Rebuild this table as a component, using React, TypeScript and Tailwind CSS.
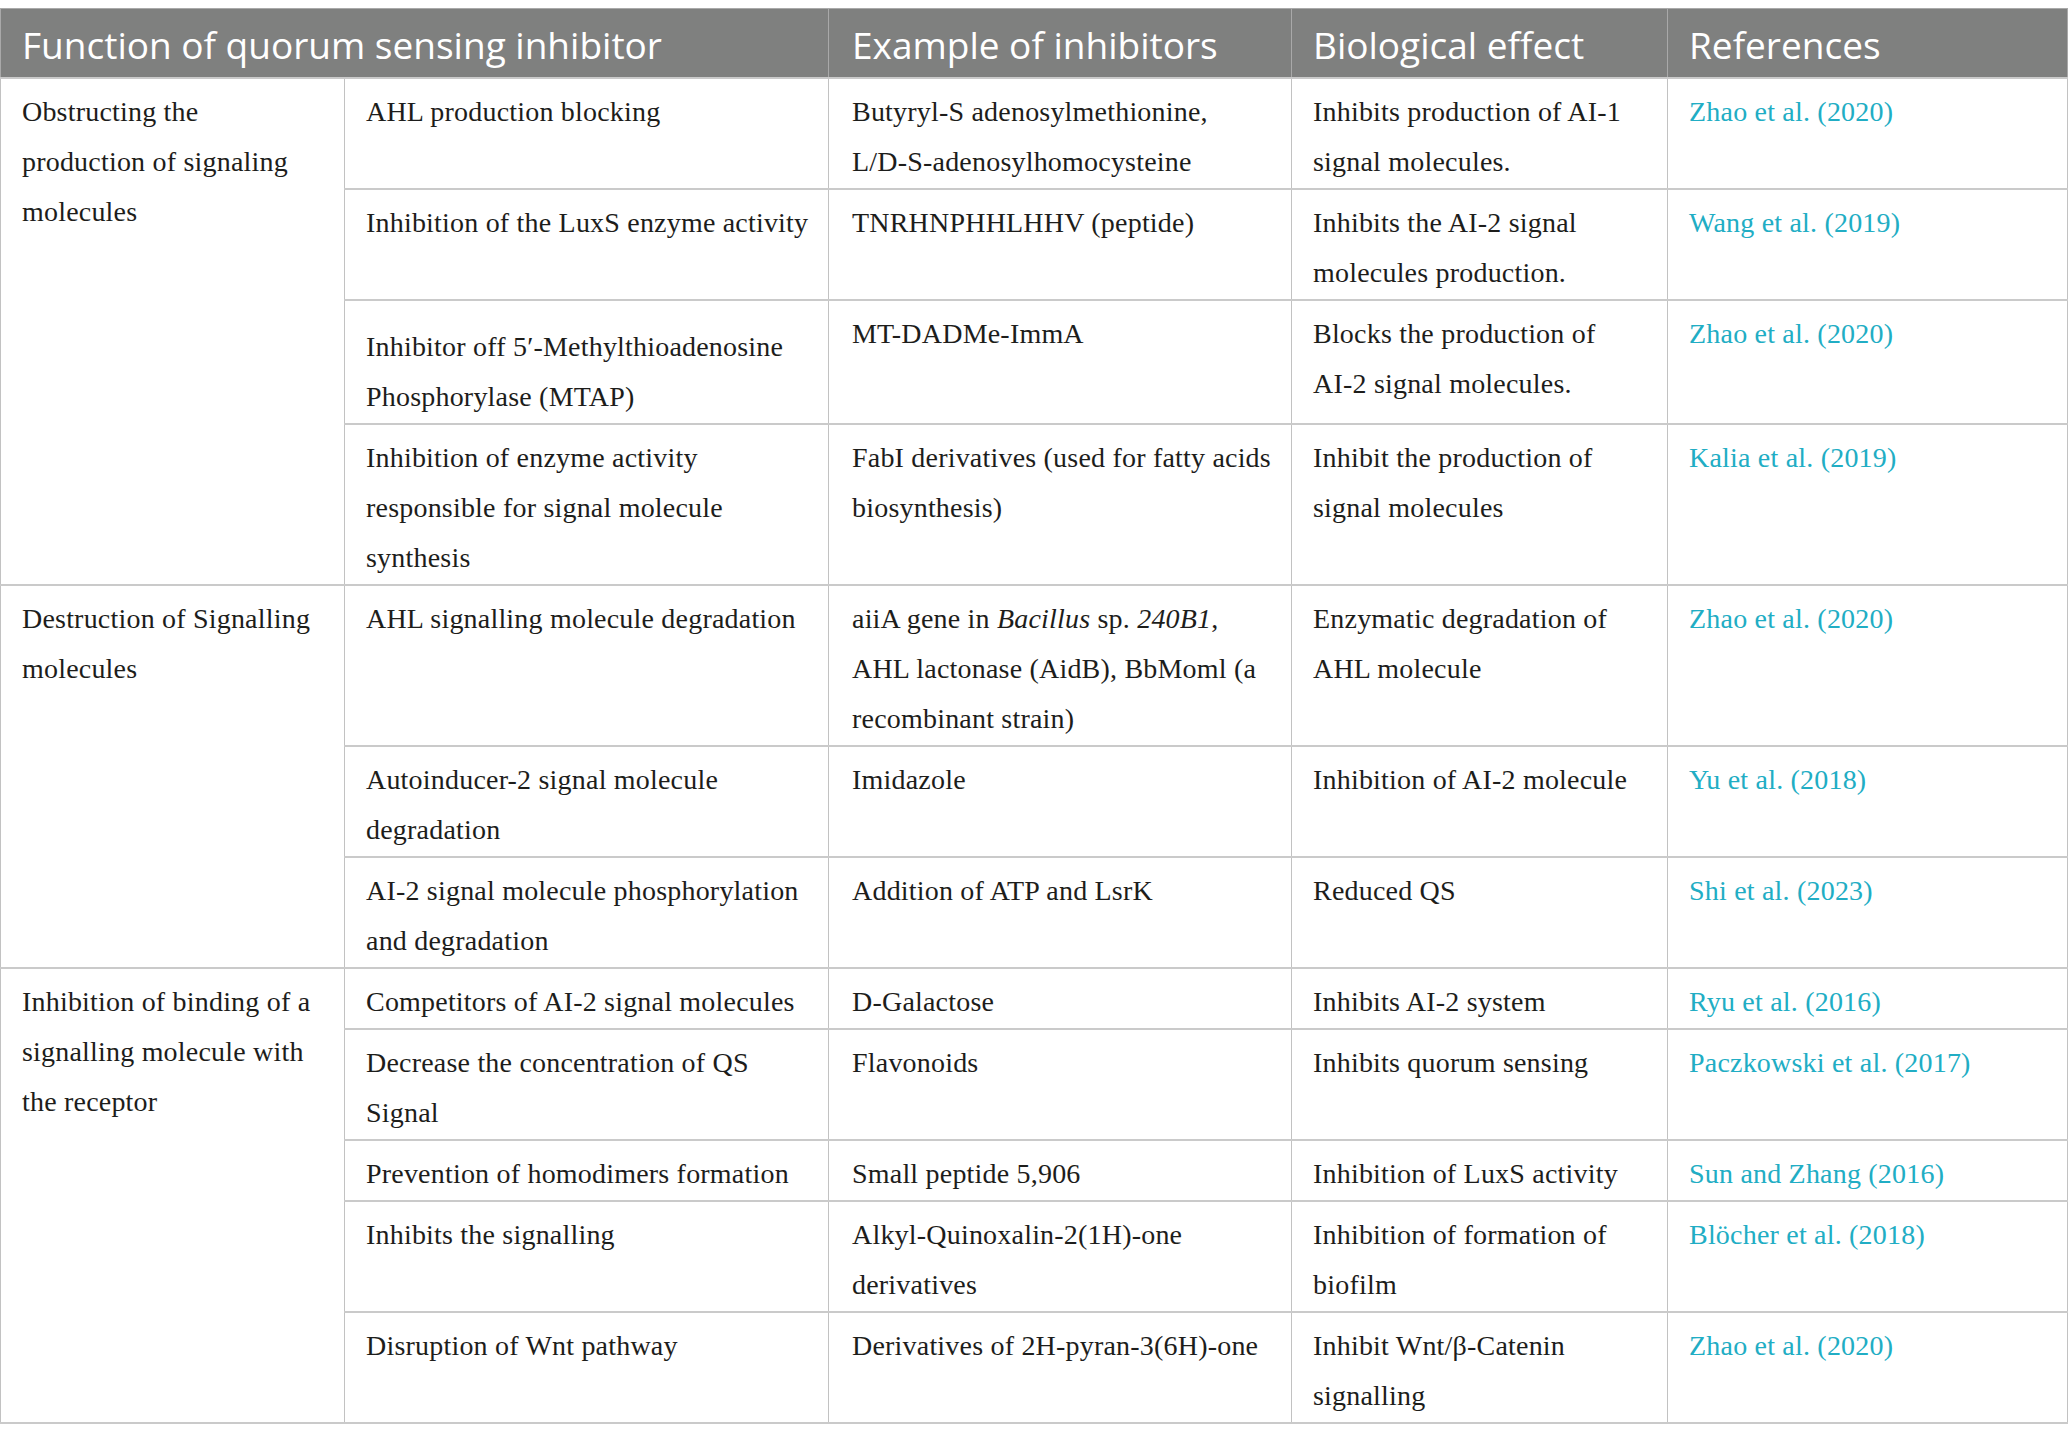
import React from 'react'

type Row = {
  fn: React.ReactNode[]
  example: React.ReactNode[]
  effect: React.ReactNode[]
  reference: string
  tall?: boolean
}

type Group = {
  title: string[]
  rows: Row[]
}

const groups: Group[] = [
  {
    title: ['Obstructing the', 'production of signaling', 'molecules'],
    rows: [
      {
        fn: ['AHL production blocking'],
        example: ['Butyryl-S adenosylmethionine,', 'L/D-S-adenosylhomocysteine'],
        effect: ['Inhibits production of AI-1', 'signal molecules.'],
        reference: 'Zhao et al. (2020)',
      },
      {
        fn: ['Inhibition of the LuxS enzyme activity'],
        example: ['TNRHNPHHLHHV (peptide)'],
        effect: ['Inhibits the AI-2 signal', 'molecules production.'],
        reference: 'Wang et al. (2019)',
      },
      {
        fn: ['Inhibitor off 5′-Methylthioadenosine', 'Phosphorylase (MTAP)'],
        example: ['MT-DADMe-ImmA'],
        effect: ['Blocks the production of', 'AI-2 signal molecules.'],
        reference: 'Zhao et al. (2020)',
        tall: true,
      },
      {
        fn: ['Inhibition of enzyme activity', 'responsible for signal molecule', 'synthesis'],
        example: ['FabI derivatives (used for fatty acids', 'biosynthesis)'],
        effect: ['Inhibit the production of', 'signal molecules'],
        reference: 'Kalia et al. (2019)',
      },
    ],
  },
  {
    title: ['Destruction of Signalling', 'molecules'],
    rows: [
      {
        fn: ['AHL signalling molecule degradation'],
        example: [
          <>
            aiiA gene in <i>Bacillus</i> sp. <i>240B1</i>,
          </>,
          'AHL lactonase (AidB), BbMoml (a',
          'recombinant strain)',
        ],
        effect: ['Enzymatic degradation of', 'AHL molecule'],
        reference: 'Zhao et al. (2020)',
      },
      {
        fn: ['Autoinducer-2 signal molecule', 'degradation'],
        example: ['Imidazole'],
        effect: ['Inhibition of AI-2 molecule'],
        reference: 'Yu et al. (2018)',
      },
      {
        fn: ['AI-2 signal molecule phosphorylation', 'and degradation'],
        example: ['Addition of ATP and LsrK'],
        effect: ['Reduced QS'],
        reference: 'Shi et al. (2023)',
      },
    ],
  },
  {
    title: ['Inhibition of binding of a', 'signalling molecule with', 'the receptor'],
    rows: [
      {
        fn: ['Competitors of AI-2 signal molecules'],
        example: ['D-Galactose'],
        effect: ['Inhibits AI-2 system'],
        reference: 'Ryu et al. (2016)',
      },
      {
        fn: ['Decrease the concentration of QS', 'Signal'],
        example: ['Flavonoids'],
        effect: ['Inhibits quorum sensing'],
        reference: 'Paczkowski et al. (2017)',
      },
      {
        fn: ['Prevention of homodimers formation'],
        example: ['Small peptide 5,906'],
        effect: ['Inhibition of LuxS activity'],
        reference: 'Sun and Zhang (2016)',
      },
      {
        fn: ['Inhibits the signalling'],
        example: ['Alkyl-Quinoxalin-2(1H)-one', 'derivatives'],
        effect: ['Inhibition of formation of', 'biofilm'],
        reference: 'Blöcher et al. (2018)',
      },
      {
        fn: ['Disruption of Wnt pathway'],
        example: ['Derivatives of 2H-pyran-3(6H)-one'],
        effect: ['Inhibit Wnt/β-Catenin', 'signalling'],
        reference: 'Zhao et al. (2020)',
      },
    ],
  },
]

function Lines({ lines }: { lines: React.ReactNode[] }) {
  return (
    <>
      {lines.map((l, i) => (
        <div key={i} className="whitespace-nowrap">
          {l}
        </div>
      ))}
    </>
  )
}

const cell = 'border-x border-x-[#c2c2c2] border-y-2 border-y-[#cacaca] pl-[21px] pr-[8px] pb-[1px] align-top'

export default function App() {
  return (
    <div className="w-[2068px] min-h-[1443px] bg-white pt-[8px]">
      <table
        className="table-fixed border-collapse w-[2067px] text-[28px] leading-[50px] tracking-[0.2px] text-[#1d1d1b]"
        style={{ fontFamily: '"Liberation Serif", "Times New Roman", serif' }}
      >
        <colgroup>
          <col className="w-[344px]" />
          <col className="w-[484px]" />
          <col className="w-[463px]" />
          <col className="w-[376px]" />
          <col className="w-[400px]" />
        </colgroup>
        <thead>
          <tr className="bg-[#7f807f] text-white text-left font-['Open_Sans',sans-serif] text-[37px] leading-[42px] tracking-normal">
            <th colSpan={2} className="font-normal border border-[#a9a9a9] pl-[21px] pt-[15px] pb-[11px]">
              Function of quorum sensing inhibitor
            </th>
            <th className="font-normal border border-[#a9a9a9] pl-[23px] pt-[15px] pb-[11px]">Example of inhibitors</th>
            <th className="font-normal border border-[#a9a9a9] pl-[21px] pt-[15px] pb-[11px]">Biological effect</th>
            <th className="font-normal border border-[#a9a9a9] pl-[21px] pt-[15px] pb-[11px]">References</th>
          </tr>
        </thead>
        <tbody>
          {groups.map((g, gi) =>
            g.rows.map((r, ri) => (
              <tr key={`${gi}-${ri}`}>
                {ri === 0 && (
                  <td rowSpan={g.rows.length} className={`${cell} pt-[8px]`}>
                    <Lines lines={g.title} />
                  </td>
                )}
                <td className={`${cell} ${r.tall ? 'pt-[21px]' : 'pt-[8px]'}`}>
                  <Lines lines={r.fn} />
                </td>
                <td className={`${cell} pt-[8px] pl-[23px]`}>
                  <Lines lines={r.example} />
                </td>
                <td className={`${cell} pt-[8px]`}>
                  <Lines lines={r.effect} />
                </td>
                <td className={`${cell} pt-[8px] text-[#21adc4]`}>
                  <a className="whitespace-nowrap">{r.reference}</a>
                </td>
              </tr>
            )),
          )}
        </tbody>
      </table>
    </div>
  )
}
